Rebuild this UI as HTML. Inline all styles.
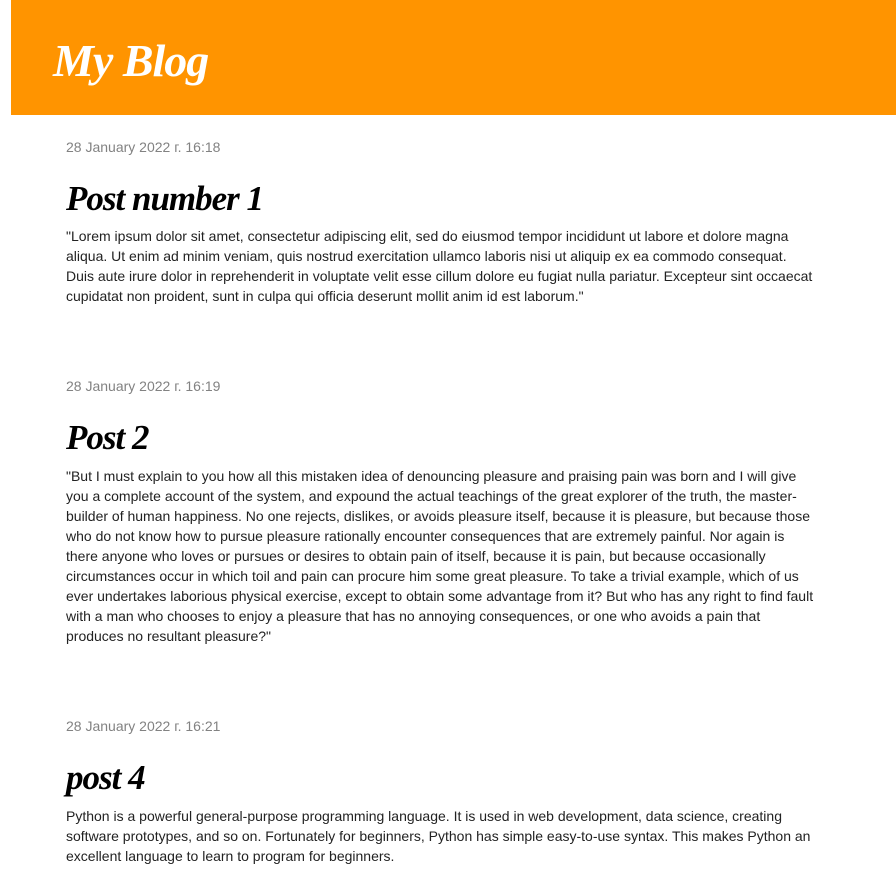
<!DOCTYPE html>
<html><head><meta charset="utf-8"><style>
body{margin:0;width:896px;height:895px;background:#fff;position:relative;overflow:hidden;font-family:"Liberation Sans",sans-serif;}
.hdr{position:absolute;left:11px;top:0;width:885px;height:115px;background:#ff9400;}
.hdr h1{position:absolute;left:42px;top:35px;margin:0;color:#fff;font-family:"Liberation Serif",serif;font-style:italic;font-weight:bold;font-size:46px;line-height:52px;letter-spacing:-1px;}
.d{position:absolute;left:66px;font-size:14px;line-height:20px;color:#828282;}
.h{position:absolute;left:66px;margin:0;font-family:"Liberation Serif",serif;font-style:italic;font-weight:bold;font-size:35px;line-height:40px;color:#000;letter-spacing:-1px;}
.p{position:absolute;left:66px;width:760px;font-size:14px;line-height:20px;color:#222;margin:0;}
</style></head><body>
<div class="hdr"><h1>My Blog</h1></div>

<div class="d" style="top:137px">28 January 2022 г. 16:18</div>
<h2 class="h" style="top:179px">Post number 1</h2>
<p class="p" style="top:226px">"Lorem ipsum dolor sit amet, consectetur adipiscing elit, sed do eiusmod tempor incididunt ut labore et dolore magna<br>aliqua. Ut enim ad minim veniam, quis nostrud exercitation ullamco laboris nisi ut aliquip ex ea commodo consequat.<br>Duis aute irure dolor in reprehenderit in voluptate velit esse cillum dolore eu fugiat nulla pariatur. Excepteur sint occaecat<br>cupidatat non proident, sunt in culpa qui officia deserunt mollit anim id est laborum."</p>

<div class="d" style="top:376px">28 January 2022 г. 16:19</div>
<h2 class="h" style="top:418px">Post 2</h2>
<p class="p" style="top:466px">"But I must explain to you how all this mistaken idea of denouncing pleasure and praising pain was born and I will give<br>you a complete account of the system, and expound the actual teachings of the great explorer of the truth, the master-<br>builder of human happiness. No one rejects, dislikes, or avoids pleasure itself, because it is pleasure, but because those<br>who do not know how to pursue pleasure rationally encounter consequences that are extremely painful. Nor again is<br>there anyone who loves or pursues or desires to obtain pain of itself, because it is pain, but because occasionally<br>circumstances occur in which toil and pain can procure him some great pleasure. To take a trivial example, which of us<br>ever undertakes laborious physical exercise, except to obtain some advantage from it? But who has any right to find fault<br>with a man who chooses to enjoy a pleasure that has no annoying consequences, or one who avoids a pain that<br>produces no resultant pleasure?"</p>

<div class="d" style="top:716px">28 January 2022 г. 16:21</div>
<h2 class="h" style="top:758px">post 4</h2>
<p class="p" style="top:806px">Python is a powerful general-purpose programming language. It is used in web development, data science, creating<br>software prototypes, and so on. Fortunately for beginners, Python has simple easy-to-use syntax. This makes Python an<br>excellent language to learn to program for beginners.</p>
</body></html>
